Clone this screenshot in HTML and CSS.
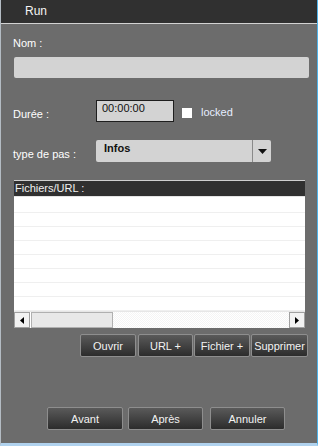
FILE: index.html
```html
<!DOCTYPE html>
<html>
<head>
<meta charset="utf-8">
<link rel="stylesheet" href="styles.css">
</head>
<body>
<div class="window">
  <div class="titlebar">Run</div>
  <div class="content">
    <div class="label nom">Nom :</div>
    <div class="field wide"></div>

    <div class="row duree">
      <div class="label rowlabel">Durée :</div>
      <div class="field time">00:00:00</div>
      <div class="check"></div>
      <div class="locked">locked</div>
    </div>

    <div class="row type">
      <div class="label rowlabel">type de pas :</div>
      <div class="select">
        <div class="select-text">Infos</div>
        <div class="select-arrow"><svg width="9" height="5" viewBox="0 0 9 5"><path d="M0 0H9L4.5 5Z" fill="#111"/></svg></div>
      </div>
    </div>

    <div class="list">
      <div class="list-header">Fichiers/URL :</div>
      <div class="list-body">
        <div class="list-row"></div><div class="list-row"></div><div class="list-row"></div>
        <div class="list-row"></div><div class="list-row"></div><div class="list-row"></div>
        <div class="list-row"></div><div class="list-row"></div>
      </div>
      <div class="hscroll">
        <div class="sb-btn"><svg width="4" height="7" viewBox="0 0 4 7"><path d="M4 0V7L0 3.5Z" fill="#000"/></svg></div>
        <div class="sb-thumb"></div>
        <div class="sb-track"></div>
        <div class="sb-btn"><svg width="4" height="7" viewBox="0 0 4 7"><path d="M0 0V7L4 3.5Z" fill="#000"/></svg></div>
      </div>
    </div>

    <div class="btnrow files">
      <div class="btn b-ouvrir">Ouvrir</div>
      <div class="btn b-url">URL +</div>
      <div class="btn b-fichier">Fichier +</div>
      <div class="btn b-suppr">Supprimer</div>
    </div>

    <div class="btnrow footer">
      <div class="btn b-avant">Avant</div>
      <div class="btn b-apres">Après</div>
      <div class="btn b-annuler">Annuler</div>
    </div>
  </div>
</div>
</body>
</html>
```
FILE: styles.css
```css
html, body {
  margin: 0;
  padding: 0;
  background: #ffffff;
}
body {
  font-family: "Liberation Sans", Arial, sans-serif;
  font-size: 11px;
  color: #ffffff;
}
.window {
  width: 316px;
  height: 443px;
  background: #6c6c6c;
  border-left: 1px solid #b4bcc4;
  border-right: 1px solid #4fb2e8;
  border-bottom: 3px solid #b0d2ee;
  display: flex;
  flex-direction: column;
  box-sizing: content-box;
}
.titlebar {
  height: 23px;
  background: #303030;
  border-bottom: 1px solid #d2d2d2;
  padding-left: 24px;
  font-size: 12px;
  line-height: 22px;
  color: #f4f4f4;
}
.content {
  padding: 12px 0 0 12px;
  display: flex;
  flex-direction: column;
}
.label {
  color: #ffffff;
}
.nom {
  height: 14px;
  line-height: 14px;
}
.field {
  background: #d3d3d3;
  color: #111;
  border-radius: 2px;
  box-sizing: border-box;
}
.wide {
  margin-top: 7px;
  margin-left: 1px;
  width: 295px;
  height: 21px;
}
.row {
  display: flex;
  align-items: center;
}
.rowlabel {
  width: 83px;
  padding-top: 6px;
}
.duree {
  margin-top: 22px;
  height: 22px;
}
.time {
  width: 78px;
  height: 22px;
  border: 1px solid #1e1e1e;
  border-radius: 0;
  padding-left: 5px;
  line-height: 15px;
}
.check {
  width: 10px;
  height: 10px;
  background: #ffffff;
  margin-left: 8px;
  margin-top: 3px;
}
.locked {
  margin-left: 9px;
  color: #e6eeff;
  padding-top: 1px;
}
.type {
  margin-top: 18px;
  height: 22px;
}
.select {
  width: 175px;
  height: 22px;
  background: #d3d3d3;
  border-radius: 2px;
  display: flex;
  color: #111;
}
.select-text {
  flex: 1;
  padding-left: 8px;
  line-height: 17px;
  font-weight: bold;
  border-right: 1px solid #8a8a8a;
}
.select-arrow {
  width: 18px;
  display: flex;
  align-items: center;
  justify-content: center;
}
.list {
  margin-top: 18px;
  margin-left: 1px;
  width: 291px;
  display: flex;
  flex-direction: column;
}
.list-header {
  height: 15px;
  background: #303030;
  border-top: 1px solid #cfcfcf;
  border-bottom: 1px solid #e4e4e4;
  line-height: 14px;
  padding-left: 1px;
  color: #f0f0f0;
}
.list-body {
  background: #ffffff;
  padding-top: 2px;
}
.list-row {
  height: 13px;
  border-bottom: 1px solid #efefef;
}
.hscroll {
  height: 16px;
  display: flex;
  background: #ffffff;
  border-top: 1px solid #e6e6e6;
}
.sb-btn {
  width: 14px;
  height: 14px;
  border: 1px solid #a0a0a0;
  background: #f2f2f2;
  display: flex;
  align-items: center;
  justify-content: center;
}
.sb-thumb {
  width: 80px;
  height: 14px;
  border: 1px solid #b0b0b0;
  background: #e8e8e8;
  margin-left: 1px;
}
.sb-track {
  flex: 1;
  background: repeating-conic-gradient(#f4f4f4 0 25%, #ffffff 0 50%) 0 0 / 2px 2px;
}
.btnrow {
  display: flex;
}
.btn {
  height: 23px;
  box-sizing: border-box;
  border: 1px solid #8e8e8e;
  border-radius: 2px;
  background: linear-gradient(#5a5a5a, #2c2c2c);
  color: #f2f2f2;
  display: flex;
  align-items: center;
  justify-content: center;
  font-size: 11px;
}
.files {
  margin-top: 6px;
  margin-left: 67px;
}
.b-ouvrir { width: 56px; }
.b-url { width: 55px; margin-left: 2px; }
.b-fichier { width: 56px; margin-left: 1px; }
.b-suppr { width: 57px; margin-left: 1px; }
.footer {
  margin-top: 50px;
  margin-left: 34px;
}
.b-avant { width: 76px; }
.b-apres { width: 75px; margin-left: 5px; }
.b-annuler { width: 75px; margin-left: 7px; }
```
